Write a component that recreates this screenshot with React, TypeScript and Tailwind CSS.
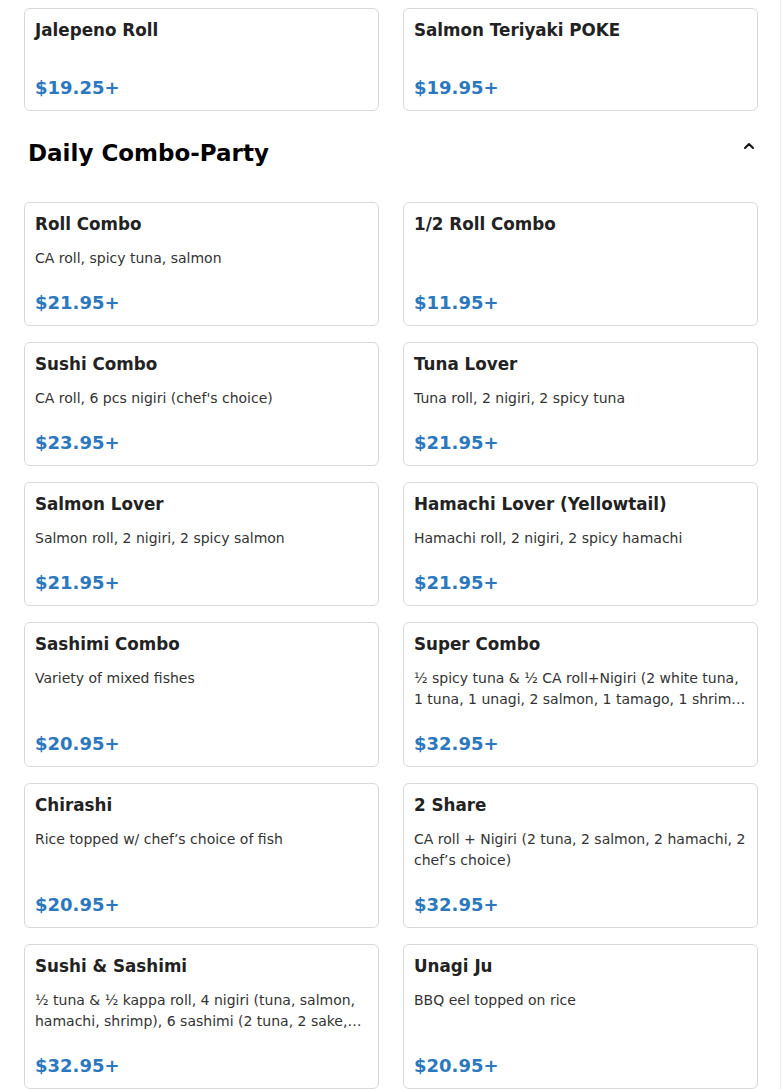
type Item = {
  name: string
  desc: string
  price: string
}

const TOP: Item[] = [
  { name: 'Jalepeno Roll', desc: '', price: '$19.25+' },
  { name: 'Salmon Teriyaki POKE', desc: '', price: '$19.95+' },
]

const COMBOS: Item[] = [
  { name: 'Roll Combo', desc: 'CA roll, spicy tuna, salmon', price: '$21.95+' },
  { name: '1/2 Roll Combo', desc: '', price: '$11.95+' },
  { name: 'Sushi Combo', desc: "CA roll, 6 pcs nigiri (chef's choice)", price: '$23.95+' },
  { name: 'Tuna Lover', desc: 'Tuna roll, 2 nigiri, 2 spicy tuna', price: '$21.95+' },
  { name: 'Salmon Lover', desc: 'Salmon roll, 2 nigiri, 2 spicy salmon', price: '$21.95+' },
  {
    name: 'Hamachi Lover (Yellowtail)',
    desc: 'Hamachi roll, 2 nigiri, 2 spicy hamachi',
    price: '$21.95+',
  },
  { name: 'Sashimi Combo', desc: 'Variety of mixed fishes', price: '$20.95+' },
  {
    name: 'Super Combo',
    desc: '½ spicy tuna & ½ CA roll+Nigiri (2 white tuna, 1 tuna, 1 unagi, 2 salmon, 1 tamago, 1 shrimp, 1 hamachi)',
    price: '$32.95+',
  },
  { name: 'Chirashi', desc: 'Rice topped w/ chef’s choice of fish', price: '$20.95+' },
  {
    name: '2 Share',
    desc: 'CA roll + Nigiri (2 tuna, 2 salmon, 2 hamachi, 2 chef’s choice)',
    price: '$32.95+',
  },
  {
    name: 'Sushi & Sashimi',
    desc: '½ tuna & ½ kappa roll, 4 nigiri (tuna, salmon, hamachi, shrimp), 6 sashimi (2 tuna, 2 sake,2 hamachi)',
    price: '$32.95+',
  },
  { name: 'Unagi Ju', desc: 'BBQ eel topped on rice', price: '$20.95+' },
]

function Card({ item }: { item: Item }) {
  return (
    <div className="flex flex-col rounded-md border border-[#d9d9d9] bg-white px-[10px] pt-[9px] pb-[9px]">
      <div className="text-[16.75px] font-bold leading-[24px] text-[#222]">{item.name}</div>
      <div className="mt-3 line-clamp-2 text-[14px] leading-[21px] text-[#333]">{item.desc}</div>
      <div className="mt-auto pt-5 text-[18px] font-bold leading-[27px] text-[#2b78be]">
        {item.price}
      </div>
    </div>
  )
}

export default function App() {
  return (
    <div
      className="min-h-[1089px] w-[781px] border-r border-[#ececec] bg-white pt-2 pl-6 pr-[22px]"
      style={{ fontFamily: '"DejaVu Sans", Verdana, sans-serif' }}
    >
      <div className="grid grid-cols-2 gap-x-6 gap-y-4">
        {TOP.map((it) => (
          <Card key={it.name} item={it} />
        ))}
      </div>

      <div className="mt-[27px] mb-[34px] flex items-start justify-between pl-1">
        <h2 className="text-[23px] font-bold leading-[30px] text-black">Daily Combo-Party</h2>
        <svg
          width="16"
          height="16"
          viewBox="0 0 24 24"
          fill="none"
          stroke="#111"
          strokeWidth="3"
          strokeLinecap="round"
          strokeLinejoin="round"
          className="mr-[1px]"
        >
          <path d="M6 15l6-6 6 6" />
        </svg>
      </div>

      <div className="grid grid-cols-2 gap-x-6 gap-y-4">
        {COMBOS.map((it) => (
          <Card key={it.name} item={it} />
        ))}
      </div>
    </div>
  )
}
